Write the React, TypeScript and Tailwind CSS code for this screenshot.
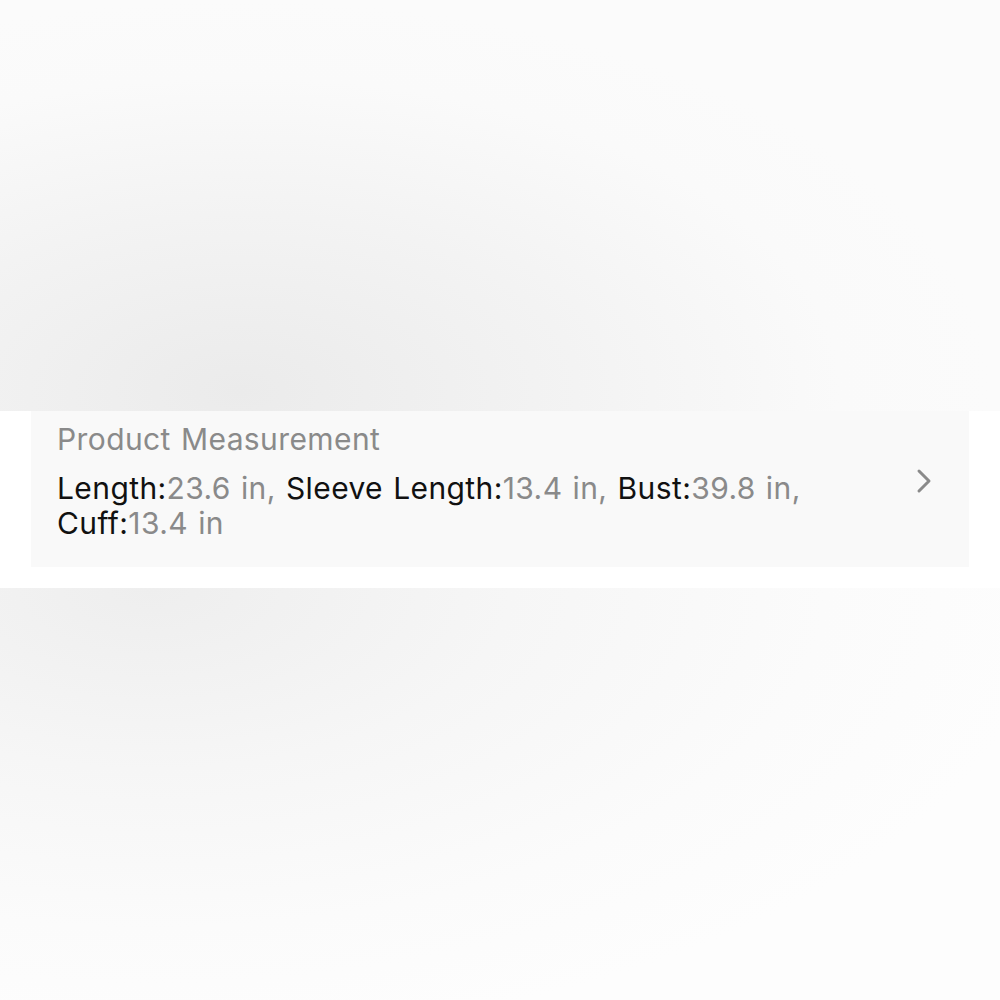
import React from 'react';

const rows = [
  { label: 'Length:', value: '23.6 in, ' },
  { label: 'Sleeve Length:', value: '13.4 in, ' },
  { label: 'Bust:', value: '39.8 in, ' },
  { label: 'Cuff:', value: '13.4 in' },
];

export default function App() {
  return (
    <div className="w-[1000px] h-[1000px] flex flex-col bg-white font-['Inter',sans-serif]">
      {/* blurred photo above */}
      <div className="h-[411px] bg-[radial-gradient(ellipse_75%_95%_at_24%_95%,#ebebeb_0%,#f3f3f3_45%,#fafafa_80%,#fbfbfb_100%)]" />

      <div className="px-[31px] pb-[21px]">
        <div className="h-[156px] bg-[#f9f9f9] flex items-start pt-[11px] pl-[26px] pr-[36px]">
          <div className="flex-1 flex flex-col tracking-[0.4px] [word-spacing:1.3px]">
            <div className="text-[30px] leading-[35px] text-[#8a8a8a]">Product Measurement</div>
            <div className="text-[30px] leading-[35px] mt-[14px] max-w-[800px]">
              {rows.map((r) => (
                <span key={r.label}>
                  <span className="text-[#111]">{r.label}</span>
                  <span className="text-[#8a8a8a]">{r.value}</span>
                </span>
              ))}
            </div>
          </div>
          <svg width="18" height="26" viewBox="0 0 18 26" className="mt-[46px]">
            <path d="M4 3 L14 13 L4 23" fill="none" stroke="#8a8a8a" strokeWidth="3" strokeLinecap="round" strokeLinejoin="round" />
          </svg>
        </div>
      </div>

      {/* blurred photo below */}
      <div className="flex-1 bg-[radial-gradient(ellipse_90%_110%_at_15%_0%,#eeeeee_0%,#f6f6f6_40%,#fbfbfb_75%,#fdfdfd_100%)]" />
    </div>
  );
}
